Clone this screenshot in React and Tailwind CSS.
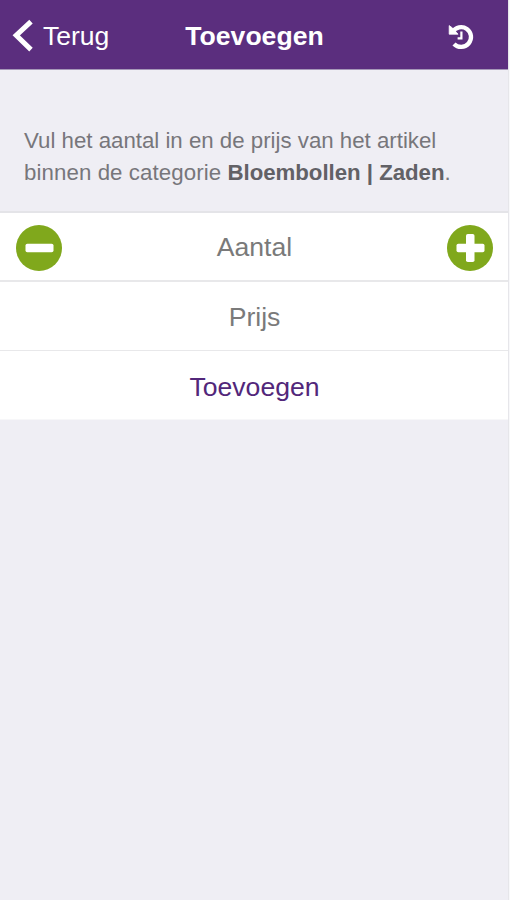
function Header() {
  return (
    <header className="relative flex h-[70px] items-center justify-center border-b border-[#a698b8] bg-[#5b2e7e] pb-[1px] text-white">
      <button className="absolute left-[12px] top-0 flex h-[72px] items-center gap-[9px] text-[26.5px]">
        <svg className="h-[34px] w-[22px]" viewBox="0 0 22 34" fill="none" stroke="currentColor" strokeWidth="5">
          <path d="M19 2.6 4.2 16.4 19 30.6" />
        </svg>
        <span className="pt-[2px]">Terug</span>
      </button>
      <h1 className="mt-[6px] pl-[1px] text-[26.6px] font-bold">Toevoegen</h1>
      <button className="absolute left-[448px] top-[23px]" aria-label="Geschiedenis">
        <svg className="h-[27px] w-[26px]" viewBox="0 0 26 27" fill="none" stroke="currentColor">
          <path d="M4.6 9A9.9 9.9 0 1 1 6 20.9" strokeWidth="4.3" />
          <path d="M1.2 2.6V11.2H10L6.5 7.2L4.5 5Z" fill="currentColor" strokeWidth="0.8" />
          <path d="M13.4 8.5V15.3H9.6" strokeWidth="2.2" />
        </svg>
      </button>
    </header>
  );
}

function RoundButton({ plus }) {
  return (
    <button className="h-[46px] w-[46px]" aria-label={plus ? "Meer" : "Minder"}>
      <svg className="h-[46px] w-[46px]" viewBox="0 0 46 46">
        <circle cx="23" cy="23" r="23" fill="#80a81c" />
        <rect x="9.5" y="18.7" width="28" height="8.5" rx="1.8" fill="#fff" />
        {plus && <rect x="19" y="9" width="8.5" height="28" rx="1.8" fill="#fff" />}
      </svg>
    </button>
  );
}

export default function App() {
  return (
    <div className="h-[900px] w-[510px] bg-[#f8f8fa] font-['Liberation_Sans',Arial,sans-serif]">
      <div className="h-full w-[509px] border-r border-[#e6e6ea] bg-[#efeef4]">
        <Header />
        <p className="h-[141px] whitespace-nowrap pl-[24px] pt-[55px] text-[22.25px] leading-[32px] text-[#77767b]">
          Vul het aantal in en de prijs van het artikel
          <br />
          <span className="tracking-[0.09px]">binnen de categorie </span>
          <strong className="tracking-[-0.03px] text-[#626166]">Bloembollen | Zaden</strong>.
        </p>
        <div className="border-t-2 border-[#e4e4e8] bg-white text-[26.6px] text-[#7a7a7a]">
          <div className="flex h-[69px] items-center justify-between border-b-2 border-[#e8e8ea] pl-[16px] pr-[15px] pt-[2px]">
            <RoundButton />
            <span>Aantal</span>
            <RoundButton plus />
          </div>
          <div className="flex h-[69px] items-center justify-center border-b border-[#e8e8ea] pl-[1px] pt-[4px]">Prijs</div>
          <button className="flex h-[69px] w-full items-center justify-center border-b border-[#f7f7f9] pl-[1px] pt-[5px] text-[#52277a]">
            Toevoegen
          </button>
        </div>
      </div>
    </div>
  );
}
